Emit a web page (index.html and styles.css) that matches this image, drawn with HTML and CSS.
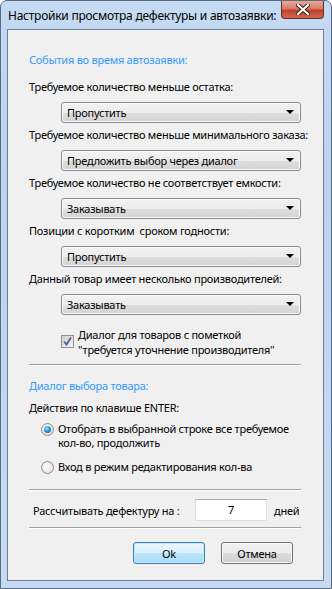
FILE: index.html
```html
<!DOCTYPE html>
<html lang="ru">
<head>
    <meta charset="UTF-8">
    <meta name="viewport" content="width=device-width, initial-scale=1.0">
    <title>Настройки просмотра дефектуры и автозаявки</title>
    <link rel="stylesheet" href="styles.css">
</head>
<body>
    <div class="window">
        <div class="titlebar">
            <span class="title">Настройки просмотра дефектуры и автозаявки:</span>
            <div class="close">
                <svg width="14" height="11" viewBox="0 0 14 11">
                    <path d="M2 1 L12 10 M12 1 L2 10" stroke="#3a1510" stroke-width="4" stroke-linecap="square"/>
                    <path d="M2 1 L12 10 M12 1 L2 10" stroke="#ffffff" stroke-width="2.2" stroke-linecap="square"/>
                </svg>
            </div>
        </div>

        <div class="client">
            <div class="group-title first">События во время автозаявки:</div>

            <div class="label">Требуемое количество меньше остатка:</div>
            <div class="combo">Пропустить</div>

            <div class="label">Требуемое количество меньше минимального заказа:</div>
            <div class="combo">Предложить выбор через диалог</div>

            <div class="label">Требуемое количество не соответствует емкости:</div>
            <div class="combo">Заказывать</div>

            <div class="label">Позиции с коротким&nbsp; сроком годности:</div>
            <div class="combo">Пропустить</div>

            <div class="label">Данный товар имеет несколько производителей:</div>
            <div class="combo">Заказывать</div>

            <div class="check-row">
                <span class="checkbox">
                    <svg width="11" height="11" viewBox="0 0 11 11">
                        <path d="M2 5.5 L4.5 8.5 L9 1.5" fill="none" stroke="#4a5f97" stroke-width="1.8"/>
                    </svg>
                </span>
                <span class="check-text">Диалог для товаров с пометкой<br>"требуется уточнение производителя"</span>
            </div>

            <div class="sep"></div>

            <div class="group-title">Диалог выбора товара:</div>
            <div class="label enter">Действия по клавише ENTER:</div>

            <div class="radio-row">
                <span class="radio checked"></span>
                <span class="radio-text">Отобрать в выбранной строке все требуемое<br>кол-во, продолжить</span>
            </div>
            <div class="radio-row second">
                <span class="radio"></span>
                <span class="radio-text">Вход в режим редактирования кол-ва</span>
            </div>

            <div class="sep after-radio"></div>

            <div class="days-row">
                <span class="days-label">Рассчитывать дефектуру на :</span>
                <span class="days-input">7</span>
                <span class="days-unit">дней</span>
            </div>

            <div class="sep"></div>

            <div class="buttons">
                <button class="btn default">Ok</button>
                <button class="btn">Отмена</button>
            </div>
        </div>
    </div>
</body>
</html>
```

FILE: styles.css
```css
html, body {
    margin: 0;
    padding: 0;
}
body {
    width: 332px;
    height: 589px;
    background: #ffffff;
    font-family: "Noto Sans", "Open Sans", sans-serif;
    font-size: 11px;
    color: #000;
}
.window {
    box-sizing: border-box;
    width: 332px;
    height: 589px;
    border: 1px solid #5a6b80;
    border-radius: 7px 7px 0 0;
    background: linear-gradient(to bottom, #c5dbf3 0%, #bcd3ee 30%, #c7dcf2 100%);
    display: flex;
    flex-direction: column;
}
.titlebar {
    height: 28px;
    display: flex;
    align-items: flex-start;
    justify-content: space-between;
    padding-left: 7px;
    flex-shrink: 0;
}
.title {
    margin-top: 7px;
    font-size: 12px;
    line-height: 15px;
    color: #000;
    letter-spacing: -0.25px;
    white-space: nowrap;
}
.close {
    width: 43px;
    height: 18px;
    margin-right: 7px;
    box-sizing: border-box;
    border: 1px solid #6b2a22;
    border-top: none;
    border-radius: 0 0 4px 4px;
    background: linear-gradient(to bottom, #e8a99b 0%, #d47a68 45%, #c3402b 55%, #cf6a4f 100%);
    display: flex;
    align-items: center;
    justify-content: center;
}
.client {
    flex: 1;
    min-height: 0;
    overflow: hidden;
    margin: 0 7px 7px 6px;
    border: 1px solid #6f7e92;
    background: #f0f0f0;
    padding: 0 21px 0 21px;
    line-height: 15px;
    letter-spacing: -0.25px;
    white-space: nowrap;
}
.group-title {
    color: #3399ff;
    margin-top: 12px;
}
.group-title.first {
    margin-top: 22px;
}
.label {
    margin-top: 12px;
    margin-bottom: 8px;
}
.combo + .label {
    margin-top: 4px;
}
.combo {
    box-sizing: border-box;
    height: 21px;
    margin-left: 32px;
    margin-right: 1px;
    border: 1px solid #8a8a8a;
    border-radius: 3px;
    background: linear-gradient(to bottom, #f3f3f3 0%, #ececec 50%, #dfdfdf 51%, #d3d3d3 100%);
    box-shadow: inset 0 0 0 1px #fbfbfb;
    padding-left: 5px;
    line-height: 19px;
    position: relative;
}
.combo::after {
    content: "";
    position: absolute;
    right: 6px;
    top: 7px;
    border-left: 4px solid transparent;
    border-right: 4px solid transparent;
    border-top: 4px solid #000;
}
.check-row {
    display: flex;
    margin-top: 12px;
    margin-left: 32px;
}
.checkbox {
    box-sizing: border-box;
    width: 13px;
    height: 13px;
    margin-top: 8px;
    margin-right: 4px;
    border: 1px solid #8f8f8f;
    background: linear-gradient(135deg, #cfcfcf 0%, #f4f4f4 100%);
    display: flex;
    align-items: center;
    justify-content: center;
    flex-shrink: 0;
}
.sep {
    height: 0;
    border-top: 1px solid #a0a0a0;
    border-bottom: 1px solid #ffffff;
    margin-top: 7px;
    margin-right: 1px;
}
.sep.after-radio {
    margin-top: 15px;
}
.label.enter {
    margin-top: 7px;
    margin-bottom: 0;
}
.radio-row {
    display: flex;
    margin-left: 12px;
    margin-top: 7px;
    line-height: 14px;
}
.radio-row.second {
    margin-top: 10px;
}
.radio {
    box-sizing: border-box;
    width: 13px;
    height: 13px;
    border-radius: 50%;
    border: 1px solid #8c8c8c;
    background: radial-gradient(circle at 40% 40%, #ffffff 0%, #d8d8d8 100%);
    margin-right: 4px;
    margin-top: 1px;
    flex-shrink: 0;
    position: relative;
}
.radio.checked::after {
    content: "";
    position: absolute;
    left: 2px;
    top: 2px;
    width: 7px;
    height: 7px;
    border-radius: 50%;
    background: radial-gradient(circle at 40% 35%, #9fdcff 0%, #2a8fd8 50%, #0d4f99 100%);
}
.days-row {
    display: flex;
    align-items: center;
    margin-top: 8px;
    padding-left: 4px;
}
.days-label {
    width: 162px;
}
.days-input {
    box-sizing: border-box;
    width: 72px;
    height: 22px;
    border: 1px solid #d8dde6;
    border-top-color: #abadb3;
    background: #ffffff;
    text-align: center;
    line-height: 20px;
}
.days-unit {
    margin-left: 7px;
}
.days-row + .sep {
    margin-top: 6px;
}
.buttons {
    display: flex;
    justify-content: flex-end;
    gap: 16px;
    margin-top: 13px;
    margin-right: 9px;
}
.btn {
    box-sizing: border-box;
    width: 72px;
    height: 22px;
    border: 1px solid #707070;
    border-radius: 3px;
    background: linear-gradient(to bottom, #f2f2f2 0%, #ebebeb 50%, #dddddd 51%, #cfcfcf 100%);
    box-shadow: inset 0 0 0 1px #fbfbfb;
    font-family: inherit;
    font-size: 11px;
    letter-spacing: -0.25px;
    color: #000;
    padding: 0;
}
.btn.default {
    border-color: #3c7fb1;
    background: linear-gradient(to bottom, #eaf6fd 0%, #d9f0fc 50%, #bee6fd 51%, #a7d9f5 100%);
    box-shadow: inset 0 0 0 1px #c6e6f8;
}
```
